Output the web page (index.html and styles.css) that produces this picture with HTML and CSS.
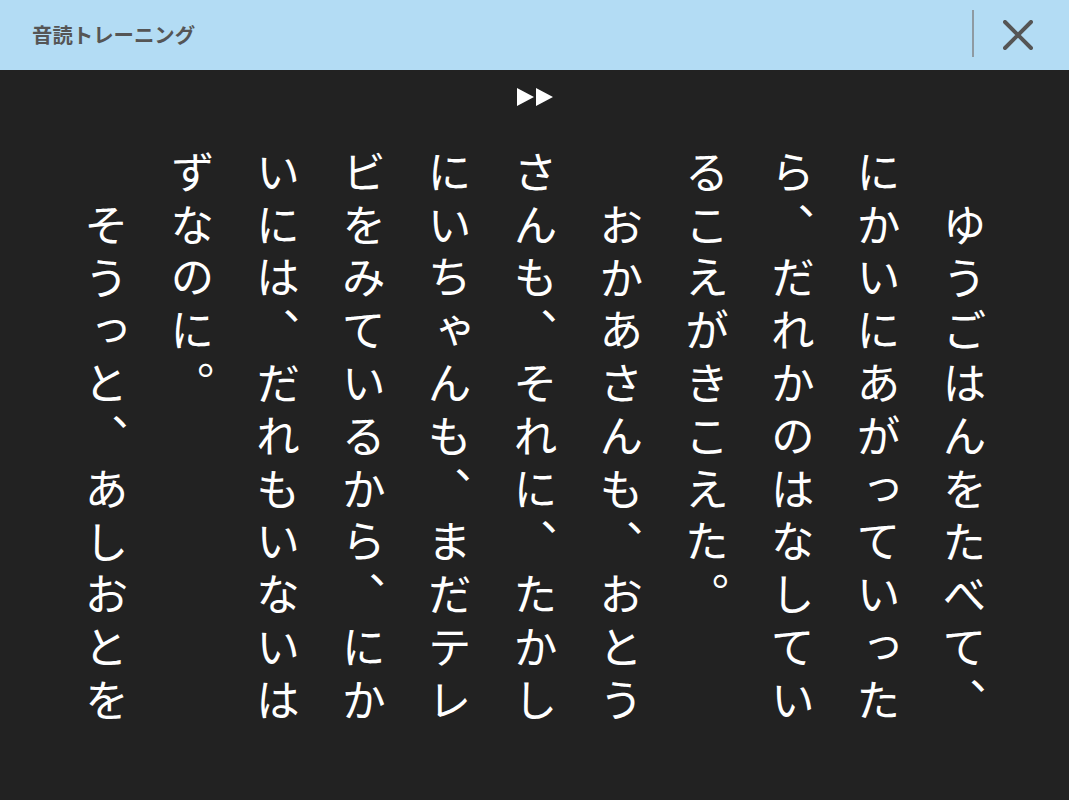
FILE: index.html
```html
<!DOCTYPE html>
<html lang="ja">
<head>
<meta charset="utf-8">
<title>音読トレーニング</title>
<link rel="stylesheet" href="styles.css">
</head>
<body>
<header class="topbar">
  <h1 class="title">音読トレーニング</h1>
  <div class="actions">
    <span class="divider"></span>
    <button class="close" aria-label="閉じる">
      <svg width="30" height="30" viewBox="0 0 30 30"><path d="M2 2 L28 28 M28 2 L2 28" stroke="#555" stroke-width="4" stroke-linecap="round" fill="none"/></svg>
    </button>
  </div>
</header>
<main class="reader">
  <div class="ff">
    <svg width="36" height="18" viewBox="0 0 36 18"><path d="M0 0 L17 9 L0 18 Z M19 0 L36 9 L19 18 Z" fill="#fff"/></svg>
  </div>
  <div class="textwrap">
    <div class="story">
      <p class="para">ゆうごはんをたべて、<br>にかいにあがっていった<br>ら、だれかのはなしてい<br>るこえがきこえた。</p>
      <p class="para">おかあさんも、おとう<br>さんも、それに、たかし<br>にいちゃんも、まだテレ<br>ビをみているから、にか<br>いには、だれもいないは<br>ずなのに。</p>
      <p class="para">そうっと、あしおとを</p>
    </div>
  </div>
</main>
</body>
</html>
```

FILE: styles.css
```css
html, body {
  margin: 0;
  padding: 0;
}
body {
  width: 1069px;
  height: 800px;
  overflow: hidden;
  background: #222222;
  font-family: "Noto Sans CJK JP", "Noto Sans", sans-serif;
}
.topbar {
  height: 70px;
  background: #b3dcf4;
  display: flex;
  align-items: center;
  justify-content: space-between;
  padding-left: 32px;
  box-sizing: border-box;
}
.title {
  margin: 0;
  font-size: 20.4px;
  font-weight: 700;
  color: #555555;
  letter-spacing: 0;
  line-height: 1;
  padding-bottom: 2px;
}
.actions {
  display: flex;
  align-items: center;
  height: 100%;
}
.divider {
  width: 2px;
  height: 47px;
  background: #8e9aa2;
  margin-top: -3px;
}
.close {
  width: 30px;
  height: 30px;
  padding: 0;
  border: 0;
  background: transparent;
  margin-left: 29px;
  margin-right: 36px;
  margin-top: 0px;
  display: flex;
}
.reader {
  height: 730px;
  padding-top: 18px;
  box-sizing: border-box;
  background: #222222;
}
.ff {
  display: flex;
  justify-content: center;
  height: 18px;
  padding-left: 1px;
}
.textwrap {
  display: flex;
  justify-content: center;
  margin-top: 44px;
  padding-left: 0;
}
.story {
  writing-mode: vertical-rl;
  height: 584px;
  color: #ffffff;
  font-size: 44px;
  letter-spacing: 8.8px;
  line-height: 85.8px;
  white-space: nowrap;
}
.para {
  margin: 0;
  text-indent: 52.8px;
}
```
